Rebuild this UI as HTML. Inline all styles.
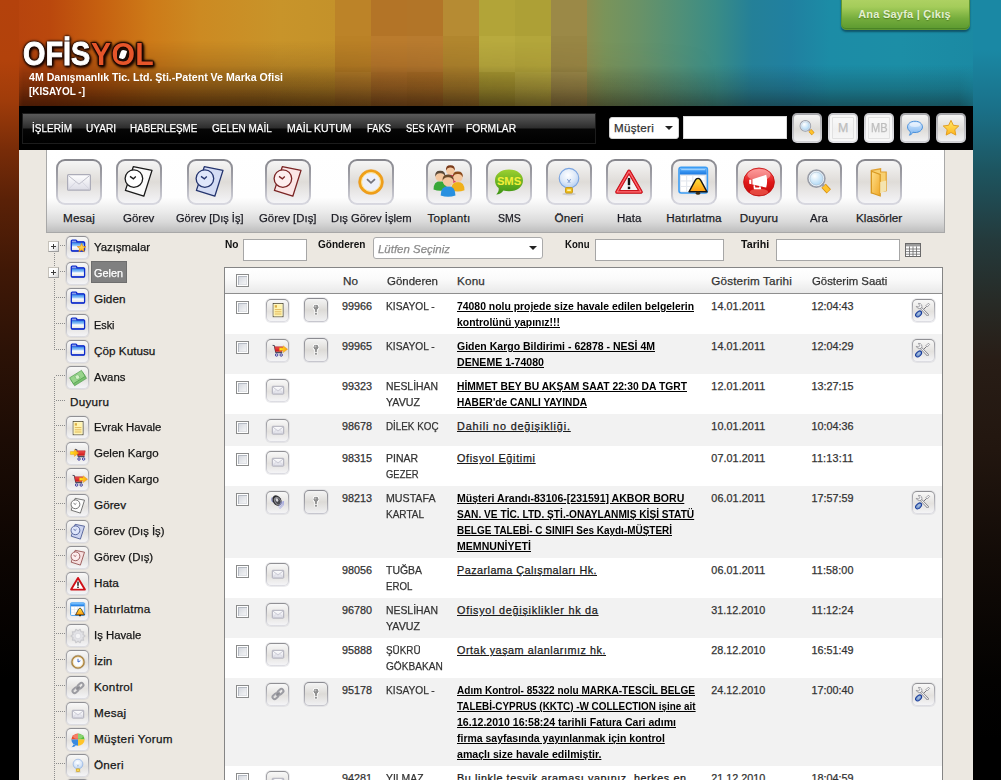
<!DOCTYPE html>
<html lang="tr"><head><meta charset="utf-8"><title>Ofisyol</title>
<style>
html,body{margin:0;padding:0}
body{width:1001px;height:780px;overflow:hidden;position:relative;background:#000;font-family:'Liberation Sans',sans-serif}
.t{position:absolute;white-space:pre;font-family:'Liberation Sans',sans-serif;transform-origin:0 50%;-webkit-text-stroke:.25px currentColor}
#bg{position:absolute;left:0;top:0;width:1001px;height:780px;overflow:hidden;
 background:linear-gradient(to right,#3a1a0a 0,#3a1a0a 20px,#222a26 970px,#222a26 100%)}
#bgfade{position:absolute;left:19px;top:0;width:982px;height:108px;-webkit-mask-image:linear-gradient(to right,#000 0,#000 940px,rgba(0,0,0,.4) 968px,rgba(0,0,0,.3) 100%);mask-image:linear-gradient(to right,#000 0,#000 940px,rgba(0,0,0,.4) 968px,rgba(0,0,0,.3) 100%);background:linear-gradient(to bottom,rgba(16,12,8,0) 0,rgba(16,12,8,0) 60%,rgba(16,12,8,.06) 67%,rgba(16,12,8,.2) 82%,rgba(16,12,8,.48) 100%)}
#bgfade:before{content:"";position:absolute;left:0;top:0;width:700px;height:108px;background:linear-gradient(to bottom,rgba(40,10,0,0) 0,rgba(40,10,0,0) 38%,rgba(40,10,0,.14) 60%,rgba(40,10,0,.3) 80%,rgba(36,10,0,.5) 100%);-webkit-mask-image:linear-gradient(to right,rgba(0,0,0,.6) 0,#000 4px,#000 35%,transparent 100%);mask-image:linear-gradient(to right,rgba(0,0,0,.6) 0,#000 4px,#000 35%,transparent 100%)}
#bgl{position:absolute;left:0;top:0;width:19px;height:780px;background:linear-gradient(to bottom,#b4420c 0,#b2420b 60px,#a03c0a 100px,#8c3409 125px,#782c08 150px,#5a2107 200px,#401806 270px,#2c1206 350px,#1c0c05 440px,#0c0502 560px,#000 680px)}
#bgr{position:absolute;left:973px;top:0;width:28px;height:780px;background:linear-gradient(to bottom,#1a88a4 0,#1a88a4 50px,#1a7088 110px,#1d5560 170px,#243a3c 240px,#272b27 300px,#281d16 360px,#22160f 450px,#120b07 560px,#030201 680px,#000 740px)}
.logo{position:absolute;top:34px;height:40px;line-height:40px;font-weight:bold;font-size:32.9px;white-space:nowrap;transform-origin:0 50%;
 text-shadow:0 0 2px #1a0900,0 0 2px #1a0900,0 0 3px #1a0900,0 0 3px #1a0900,0 0 4px #1a0900,1px 1px 2px #1a0900,1px 2px 3px #1a0900,2px 2px 4px rgba(20,8,0,.9);-webkit-text-stroke:.9px currentColor}
.lw{left:23.4px;color:#fff;transform:scaleX(.875)}
.lo{left:91px;top:34.5px;font-size:31px;color:#e6552a;transform:scaleX(.975);letter-spacing:.3px;-webkit-text-stroke:1.6px #3c1408;paint-order:stroke fill}
#lfig{position:absolute;left:116.5px;top:48.5px;width:11px;height:12px;border-radius:4px;background:#1a0d08;overflow:hidden}
#lfig:before{content:"";position:absolute;left:3px;top:1px;width:6px;height:9px;background:#fff;border-radius:3px 1px 3px 1px;transform:rotate(18deg)}
#exit{position:absolute;left:841px;top:-6px;width:129px;height:36px;border-radius:5px;background:linear-gradient(#b4d468 0,#a4cc5a 35%,#74ac3c 70%,#5c9a30 100%);box-shadow:0 2px 2px rgba(10,60,80,.7),inset 0 -1px 0 #4a8426;border:1px solid #5e9632;box-sizing:border-box}
#main{position:absolute;left:19px;top:106px;width:954px;height:674px;background:#ece8e1}
#nav{position:absolute;left:19px;top:106px;width:954px;height:44px;background:#000}
#menu{position:absolute;left:3px;top:7px;width:574px;height:31px;box-sizing:border-box;border:1px solid #1c1c1c;
 background:linear-gradient(#595959 0,#484848 20%,#2c2c2c 49%,#060606 51%,#000 100%)}
.sel{position:absolute;background:#fff;border-radius:3px}
.arr{position:absolute;width:0;height:0;border-left:4px solid transparent;border-right:4px solid transparent;border-top:4px solid #222}
.inp{position:absolute;background:#fff;border:1px solid #a6a6a6;box-sizing:border-box}
.nbtn{position:absolute;width:30px;height:30px;box-sizing:border-box;border-radius:5px;border:2px solid transparent;
 background:linear-gradient(#f4f4f4,#dedcd8 55%,#f0f0f2) padding-box,linear-gradient(#a6a6aa,#d2d2d6) border-box;display:flex;align-items:center;justify-content:center}
#tb{position:absolute;left:46px;top:150px;width:899px;height:83px;box-sizing:border-box;border:1px solid #a8a8a8;border-top:none;
 background:linear-gradient(#fff 0,#fefefe 58%,#ebebeb 75%,#d9d9d9 88%,#bebebe 100%)}
.nbtn.dis{background:linear-gradient(#fbfbfb,#f1f1f1 55%,#f8f8f8) padding-box,linear-gradient(#c8c8cc,#e4e4e8) border-box;box-shadow:inset 0 0 0 2px #f7f7f7,inset 0 0 0 3px #e2e2e2}
.bbtn{position:absolute;width:46px;height:46px;box-sizing:border-box;border-radius:9px;border:2px solid transparent;
 background:linear-gradient(#f5f5f5 0,#dfdcd8 50%,#f4f4f7 100%) padding-box,linear-gradient(#86868c 0,#a8a8b0 50%,#dadae2 100%) border-box;display:flex;align-items:center;justify-content:center}
.sbtn{position:absolute;width:23px;height:23px;box-sizing:border-box;border-radius:5px;border:1px solid transparent;
 background:linear-gradient(#f8f8f8 0,#e4e2df 55%,#f4f4f6 100%) padding-box,linear-gradient(#8e8e92 0,#b8b8be 50%,#dedee4 100%) border-box;display:flex;align-items:center;justify-content:center;box-shadow:0 0 0 1px rgba(200,200,205,.35)}
.kbtn{border-width:1.5px;background:linear-gradient(#f4f4f4 0,#dddbd7 50%,#f0f0f2 100%) padding-box,linear-gradient(#8a8a90 0,#a2a2a8 50%,#c8c8d0 100%) border-box}
.ic{display:block;overflow:visible}
.vd{position:absolute;width:1px;background:repeating-linear-gradient(to bottom,#8c8c8c 0,#8c8c8c 1px,transparent 1px,transparent 2px)}
.hd{position:absolute;height:1px;background:repeating-linear-gradient(to right,#8c8c8c 0,#8c8c8c 1px,transparent 1px,transparent 2px)}
.plus{position:absolute;width:11px;height:11px;box-sizing:border-box;border:1px solid #c6c2ba;border-right-color:#9e9e9e;border-bottom-color:#9e9e9e;background:linear-gradient(135deg,#fff 0,#fff 40%,#d6d6d6 100%)}
.plus:before{content:"";position:absolute;left:2px;top:4px;width:5px;height:1px;background:#3c3c3c}
.plus:after{content:"";position:absolute;left:4px;top:2px;width:1px;height:5px;background:#3c3c3c}
#tbl{position:absolute;left:224px;top:267px;width:719px;height:520px;box-sizing:border-box;border:1px solid #858585;background:#fff}
#th{position:absolute;left:0;top:0;width:717px;height:26px;box-sizing:border-box;border-bottom:1px solid #8e8e8e;background:linear-gradient(#fff 0,#fafafa 45%,#e9e9e9 100%)}
.alt{position:absolute;left:225px;width:717px;background:#f2f2f2}
.cb{position:absolute;width:13px;height:13px;box-sizing:border-box;border:1px solid #8b8c8c;background:linear-gradient(135deg,#cdd1d9 0,#e4e6ea 50%,#fbfbfb 100%);box-shadow:inset 0 0 0 1px #fff,inset 1px 1px 0 1px #b4b9c2,inset -1px -1px 0 1px #dfe1e5}
</style></head>
<body>
<svg width="0" height="0" style="position:absolute"><defs>
<linearGradient id="gFold" x1="0" y1="0" x2="0" y2="1"><stop offset="0" stop-color="#cfe6ff"/><stop offset="0.16" stop-color="#ffffff"/><stop offset="0.24" stop-color="#2f86ea"/><stop offset="0.56" stop-color="#b4d8fa"/><stop offset="0.6" stop-color="#ffffff"/><stop offset="1" stop-color="#dcdcdc"/></linearGradient>
<linearGradient id="gEnv" x1="0" y1="0" x2="0" y2="1"><stop offset="0" stop-color="#ffffff"/><stop offset="1" stop-color="#dcdce6"/></linearGradient>
<linearGradient id="gGold" x1="0" y1="0" x2="0" y2="1"><stop offset="0" stop-color="#ffea6a"/><stop offset="1" stop-color="#ffb41c"/></linearGradient>
<linearGradient id="gRed" x1="0" y1="0" x2="0" y2="1"><stop offset="0" stop-color="#ff6a6a"/><stop offset="0.5" stop-color="#e01818"/><stop offset="1" stop-color="#c00808"/></linearGradient>
<linearGradient id="gSms" x1="0" y1="0" x2="0" y2="1"><stop offset="0" stop-color="#9cd030"/><stop offset="1" stop-color="#3c9414"/></linearGradient>
<linearGradient id="gBub" x1="0" y1="0" x2="0" y2="1"><stop offset="0" stop-color="#dcecff"/><stop offset="1" stop-color="#7ab4f0"/></linearGradient>
<radialGradient id="gLens" cx="0.4" cy="0.35" r="0.7"><stop offset="0" stop-color="#ffffff"/><stop offset="1" stop-color="#9cd0f4"/></radialGradient>
<radialGradient id="gBulb" cx="0.45" cy="0.35" r="0.65"><stop offset="0" stop-color="#ffffff"/><stop offset="0.6" stop-color="#dce8f8"/><stop offset="1" stop-color="#b4cef0"/></radialGradient>
<linearGradient id="gCart" x1="0" y1="0" x2="0" y2="1"><stop offset="0" stop-color="#f05050"/><stop offset="1" stop-color="#d01818"/></linearGradient>
<linearGradient id="gArrow" x1="0" y1="0" x2="1" y2="0"><stop offset="0" stop-color="#fff020"/><stop offset="1" stop-color="#ff9a10"/></linearGradient>
<linearGradient id="gBell" x1="0" y1="0" x2="0" y2="1"><stop offset="0" stop-color="#ffe23a"/><stop offset="1" stop-color="#ff9a10"/></linearGradient>
<linearGradient id="gCal" x1="0" y1="0" x2="0" y2="1"><stop offset="0" stop-color="#58b0ff"/><stop offset="1" stop-color="#1a78e0"/></linearGradient>
<linearGradient id="gFolY" x1="0" y1="0" x2="1" y2="1"><stop offset="0" stop-color="#ffe08a"/><stop offset="1" stop-color="#f0a828"/></linearGradient>
</defs></svg>
<div id="bg"><svg style="position:absolute;left:0;top:0" width="1001" height="108" viewBox="0 0 1001 108" shape-rendering="crispEdges"><defs><linearGradient id="hz" x1="0" y1="0" x2="1" y2="0"><stop offset="0.0000" stop-color="rgb(181,66,14)"/><stop offset="0.0500" stop-color="rgb(186,72,13)"/><stop offset="0.0999" stop-color="rgb(198,96,16)"/><stop offset="0.1499" stop-color="rgb(205,122,24)"/><stop offset="0.1998" stop-color="rgb(204,138,34)"/><stop offset="0.2797" stop-color="rgb(200,148,42)"/><stop offset="0.3347" stop-color="rgb(196,146,42)"/><stop offset="0.3706" stop-color="rgb(186,122,44)"/><stop offset="0.4426" stop-color="rgb(184,124,48)"/><stop offset="0.4595" stop-color="rgb(184,140,52)"/><stop offset="0.4965" stop-color="rgb(180,166,58)"/><stop offset="0.5504" stop-color="rgb(176,164,58)"/><stop offset="0.5684" stop-color="rgb(154,136,70)"/><stop offset="0.6044" stop-color="rgb(122,148,90)"/><stop offset="0.6404" stop-color="rgb(104,146,104)"/><stop offset="0.6793" stop-color="rgb(80,144,120)"/><stop offset="0.7153" stop-color="rgb(58,140,134)"/><stop offset="0.7512" stop-color="rgb(36,128,152)"/><stop offset="0.7892" stop-color="rgb(32,128,160)"/><stop offset="0.8292" stop-color="rgb(28,140,166)"/><stop offset="0.8991" stop-color="rgb(28,142,166)"/><stop offset="1.0000" stop-color="rgb(26,136,162)"/></linearGradient></defs><rect width="1001" height="108" fill="url(#hz)"/><rect x="335" y="0" width="36" height="36" fill="rgb(188,131,40)"/><rect x="335" y="36" width="36" height="36" fill="rgb(186,129,38)"/><rect x="335" y="72" width="36" height="36" fill="rgb(193,136,45)"/><rect x="371" y="0" width="36" height="36" fill="rgb(179,116,39)"/><rect x="371" y="36" width="36" height="36" fill="rgb(186,123,45)"/><rect x="371" y="72" width="36" height="36" fill="rgb(183,120,43)"/><rect x="407" y="0" width="36" height="36" fill="rgb(178,117,40)"/><rect x="407" y="36" width="36" height="36" fill="rgb(184,123,47)"/><rect x="407" y="72" width="36" height="36" fill="rgb(178,117,40)"/><rect x="443" y="0" width="36" height="36" fill="rgb(182,139,51)"/><rect x="443" y="36" width="36" height="36" fill="rgb(177,134,46)"/><rect x="443" y="72" width="36" height="36" fill="rgb(178,134,46)"/><rect x="479" y="0" width="36" height="36" fill="rgb(178,164,56)"/><rect x="479" y="36" width="36" height="36" fill="rgb(184,170,62)"/><rect x="479" y="72" width="36" height="36" fill="rgb(174,160,52)"/><rect x="515" y="0" width="36" height="36" fill="rgb(173,160,54)"/><rect x="515" y="36" width="36" height="36" fill="rgb(179,166,59)"/><rect x="515" y="72" width="36" height="36" fill="rgb(183,170,64)"/><rect x="551" y="0" width="36" height="36" fill="rgb(155,137,71)"/><rect x="551" y="36" width="36" height="36" fill="rgb(152,134,68)"/><rect x="551" y="72" width="36" height="36" fill="rgb(160,142,76)"/></svg><div id="bgfade"></div><div id="bgl"></div><div id="bgr"></div></div>
<div class="logo lw">OFİS</div><div class="logo lo">YOL</div><div id="lfig"></div>
<div id="exit"></div>
<div id="main"></div>
<div id="nav"><div id="menu"></div></div>
<div class="sel" style="left:609px;top:117px;width:70px;height:22px;box-sizing:border-box;border:1px solid #d4d4d4"></div>
<div class="arr" style="left:665px;top:126px"></div>
<div class="inp" style="left:683px;top:116px;width:104px;height:23px;border-color:#d8d8d8"></div>
<div class="nbtn" style="left:792px;top:113px"><svg class="ic" width="20" height="20" viewBox="0 0 16 16" ><path d="M10.3 9.9 L12.9 12.7" stroke="#d89010" stroke-width="3" stroke-linecap="butt"/><path d="M10.4 10 L12.7 12.5" stroke="#ffc42c" stroke-width="2.1" stroke-linecap="butt"/><path d="M9.3 8.9 L10.4 10" stroke="#a0a0a8" stroke-width="1.5"/><circle cx="6.7" cy="6.3" r="4.2" fill="url(#gLens)" stroke="#9a9ea8" stroke-width="0.9"/><circle cx="6.7" cy="6.3" r="3.6" fill="none" stroke="#eef2f8" stroke-width="0.5"/><circle cx="6.7" cy="6.3" r="3.2" fill="none" stroke="#b4c4d4" stroke-width="0.3"/></svg></div>
<div class="nbtn dis" style="left:828px;top:113px"></div>
<div class="nbtn dis" style="left:864px;top:113px"></div>
<div class="nbtn" style="left:900px;top:113px"><svg class="ic" width="18" height="18" viewBox="0 0 16 16" ><path d="M8 2 C12 2 14.6 4.2 14.6 7 C14.6 9.8 12 12 8 12 C7.4 12 6.8 11.9 6.2 11.8 C5.6 13 4.4 14 3 14.4 C3.8 13.4 4 12.2 3.8 11.2 C2.2 10.2 1.4 8.8 1.4 7 C1.4 4.2 4 2 8 2Z" fill="url(#gBub)" stroke="#3c88d8" stroke-width="0.8"/><ellipse cx="8" cy="5" rx="4.6" ry="2" fill="#ffffff" opacity="0.5"/></svg></div>
<div class="nbtn" style="left:936px;top:113px"><svg class="ic" width="18" height="18" viewBox="0 0 16 16" ><path d="M8 1.2 L10.1 5.6 L14.9 6.2 L11.4 9.5 L12.3 14.3 L8 12 L3.7 14.3 L4.6 9.5 L1.1 6.2 L5.9 5.6 Z" fill="url(#gGold)" stroke="#e09818" stroke-width="0.8" stroke-linejoin="round"/></svg></div>
<div id="tb"></div>
<div class="bbtn" style="left:56px;top:159px"><svg class="ic" width="32" height="32" viewBox="0 0 16 16" ><rect x="2.3" y="4.3" width="11.4" height="7.8" rx="0.5" fill="url(#gEnv)" stroke="#acacb8" stroke-width="0.6"/><path d="M2.7 4.8 L8 9.1 L13.3 4.8" fill="none" stroke="#bcbcc8" stroke-width="0.48"/><path d="M2.7 11.7 L6.4 8 M13.3 11.7 L9.6 8" fill="none" stroke="#d2d2dc" stroke-width="0.42"/></svg></div>
<div class="bbtn" style="left:116px;top:159px"><svg class="ic" width="32" height="32" viewBox="0 0 16 16" ><path d="M5.15 0.35 L14.5 2.2 L10.4 15.1 L1.2 12.2 Z" fill="#fafafa" stroke="#1a1a1a" stroke-width="0.65" stroke-linejoin="round"/><circle cx="5.45" cy="6.3" r="4.4" fill="#ffffff" stroke="#1a1a1a" stroke-width="0.65"/><path d="M3.5 5.2 L5.2 6.4 L6.4 5.3" fill="none" stroke="#1a1a1a" stroke-width="0.65"/></svg></div>
<div class="bbtn" style="left:187px;top:159px"><svg class="ic" width="32" height="32" viewBox="0 0 16 16" ><path d="M5.15 0.35 L14.5 2.2 L10.4 15.1 L1.2 12.2 Z" fill="#d4dcf4" stroke="#24346e" stroke-width="0.65" stroke-linejoin="round"/><circle cx="5.45" cy="6.3" r="4.4" fill="#dfe6fa" stroke="#24346e" stroke-width="0.65"/><path d="M3.5 5.2 L5.2 6.4 L6.4 5.3" fill="none" stroke="#24346e" stroke-width="0.65"/></svg></div>
<div class="bbtn" style="left:265px;top:159px"><svg class="ic" width="32" height="32" viewBox="0 0 16 16" ><path d="M5.15 0.35 L14.5 2.2 L10.4 15.1 L1.2 12.2 Z" fill="#fbe6e6" stroke="#7a2424" stroke-width="0.65" stroke-linejoin="round"/><circle cx="5.45" cy="6.3" r="4.4" fill="#fdeeee" stroke="#7a2424" stroke-width="0.65"/><path d="M3.5 5.2 L5.2 6.4 L6.4 5.3" fill="none" stroke="#7a2424" stroke-width="0.65"/></svg></div>
<div class="bbtn" style="left:348px;top:159px"><svg class="ic" width="32" height="32" viewBox="0 0 16 16" ><circle cx="8" cy="8" r="5.5" fill="#eef0fa" stroke="#f0a018" stroke-width="1.3"/><circle cx="8" cy="8" r="4.7" fill="none" stroke="#ffe08a" stroke-width="0.5"/><circle cx="8" cy="8" r="6.2" fill="none" stroke="#e89010" stroke-width="0.3"/><path d="M6 6.6 L8 8.4 L10 6.6" fill="none" stroke="#74747e" stroke-width="0.9"/></svg></div>
<div class="bbtn" style="left:426px;top:159px"><svg class="ic" width="32" height="32" viewBox="0 0 16 16" ><g transform="translate(8 8) scale(1.16) translate(-8 -8.6)"><path d="M6.039999999999999 8.56 Q6.039999999999999 5.36 8.6 5.36 Q11.16 5.36 11.16 8.56 Q8.6 9.520000000000001 6.039999999999999 8.56Z" fill="#e03860"/><circle cx="8.6" cy="3.6" r="1.8399999999999999" fill="#f4c8a0"/><path d="M6.68 3.6 Q6.52 1.2800000000000002 8.6 1.3600000000000003 Q10.68 1.2800000000000002 10.52 3.6 Q9.879999999999999 2.16 8.6 2.32 Q7.319999999999999 2.16 6.68 3.6Z" fill="#7a3a1a"/><path d="M1.3199999999999998 11.879999999999999 Q1.3199999999999998 8.28 4.2 8.28 Q7.08 8.28 7.08 11.879999999999999 Q4.2 12.96 1.3199999999999998 11.879999999999999Z" fill="#38a838"/><circle cx="4.2" cy="6.3" r="2.07" fill="#f4c8a0"/><path d="M2.04 6.3 Q1.8599999999999999 3.69 4.2 3.78 Q6.540000000000001 3.69 6.36 6.3 Q5.640000000000001 4.68 4.2 4.859999999999999 Q2.76 4.68 2.04 6.3Z" fill="#5a4a3a"/><path d="M8.92 12.18 Q8.92 8.58 11.8 8.58 Q14.680000000000001 8.58 14.680000000000001 12.18 Q11.8 13.26 8.92 12.18Z" fill="#f0b018"/><circle cx="11.8" cy="6.6" r="2.07" fill="#f4c8a0"/><path d="M9.64 6.6 Q9.46 3.9899999999999998 11.8 4.08 Q14.14 3.9899999999999998 13.96 6.6 Q13.24 4.9799999999999995 11.8 5.159999999999999 Q10.360000000000001 4.9799999999999995 9.64 6.6Z" fill="#8a4a1a"/><path d="M4.3999999999999995 14.399999999999999 Q4.3999999999999995 10.399999999999999 7.6 10.399999999999999 Q10.8 10.399999999999999 10.8 14.399999999999999 Q7.6 15.6 4.3999999999999995 14.399999999999999Z" fill="#2890e0"/><circle cx="7.6" cy="8.2" r="2.3" fill="#f4c8a0"/><path d="M5.199999999999999 8.2 Q5.0 5.299999999999999 7.6 5.3999999999999995 Q10.2 5.299999999999999 10.0 8.2 Q9.2 6.3999999999999995 7.6 6.6 Q6.0 6.3999999999999995 5.199999999999999 8.2Z" fill="#6a4a2a"/></g></svg></div>
<div class="bbtn" style="left:486px;top:159px"><svg class="ic" width="32" height="32" viewBox="0 0 16 16" ><path d="M8 1.8 C12.2 1.8 15 4.2 15 7.2 C15 10.2 12.2 12.6 8 12.6 C7 12.6 6 12.4 5.2 12.2 C4.4 13.4 3 14.2 1.6 14.2 C2.6 13.4 3 12.2 2.8 11 C1.6 10 1 8.8 1 7.2 C1 4.2 3.8 1.8 8 1.8Z" fill="url(#gSms)"/><text x="8" y="9.3" font-family="Liberation Sans, sans-serif" font-weight="bold" font-size="5.6" text-anchor="middle" fill="#f4f03a">SMS</text></svg></div>
<div class="bbtn" style="left:546px;top:159px"><svg class="ic" width="32" height="32" viewBox="0 0 16 16" ><ellipse cx="8" cy="14" rx="3.4" ry="0.7" fill="#000" opacity="0.12"/><circle cx="8" cy="6.1" r="4.9" fill="url(#gBulb)" stroke="#7aa4e0" stroke-width="0.55"/><path d="M7.2 6.6 L8 7.8 L8.8 6.6 M7.4 8.4 L8 7.8 L8.6 8.4" fill="none" stroke="#6a8cc8" stroke-width="0.45"/><rect x="6.3" y="10.8" width="3.4" height="2.7" rx="0.4" fill="#f0c020" stroke="#c89810" stroke-width="0.5"/><rect x="7.1" y="11.7" width="1.8" height="0.8" fill="#fff4b0"/></svg></div>
<div class="bbtn" style="left:606px;top:159px"><svg class="ic" width="32" height="32" viewBox="0 0 16 16" ><g transform="translate(8 8.2) scale(0.93) translate(-8 -8.2)"><path d="M8 2.3 L14.4 13.3 H1.6 Z" fill="#f4f4f4" stroke="#b00810" stroke-width="2" stroke-linejoin="round"/><path d="M8 2.3 L14.4 13.3 H1.6 Z" fill="none" stroke="#e8202a" stroke-width="1.45" stroke-linejoin="round"/><path d="M8 2.3 L14.4 13.3 H1.6 Z" fill="none" stroke="#ffb0b0" stroke-width="0.35" stroke-linejoin="round"/><rect x="7.35" y="5.8" width="1.3" height="3.9" fill="#111"/><rect x="7.35" y="10.5" width="1.3" height="1.3" fill="#111"/></g></svg></div>
<div class="bbtn" style="left:671px;top:159px"><svg class="ic" width="32" height="32" viewBox="0 0 16 16" ><rect x="0.5" y="0.7" width="14.2" height="12.8" rx="1.1" fill="#e4e8ee" stroke="#3a9cf4" stroke-width="0.8"/><path d="M0.9 4.3 V1.8 Q0.9 1.1 1.6 1.1 H13.6 Q14.3 1.1 14.3 1.8 V4.3 Z" fill="url(#gCal)"/><path d="M1.6 1.8 H13.6" stroke="#9ad0ff" stroke-width="0.6"/><rect x="1.50" y="5.00" width="2.5" height="2.2" fill="#ffffff"/><rect x="4.60" y="5.00" width="2.5" height="2.2" fill="#ffffff"/><rect x="7.70" y="5.00" width="2.5" height="2.2" fill="#ffffff"/><rect x="10.80" y="5.00" width="2.5" height="2.2" fill="#ffffff"/><rect x="1.50" y="7.75" width="2.5" height="2.2" fill="#ffffff"/><rect x="4.60" y="7.75" width="2.5" height="2.2" fill="#ffffff"/><rect x="7.70" y="7.75" width="2.5" height="2.2" fill="#ffffff"/><rect x="10.80" y="7.75" width="2.5" height="2.2" fill="#ffffff"/><rect x="1.50" y="10.50" width="2.5" height="2.2" fill="#ffffff"/><rect x="4.60" y="10.50" width="2.5" height="2.2" fill="#ffffff"/><rect x="7.70" y="10.50" width="2.5" height="2.2" fill="#ffffff"/><rect x="10.80" y="10.50" width="2.5" height="2.2" fill="#ffffff"/><path d="M10 6.2 Q10.9 6.2 11.4 7.2 L14.5 12.9 H5.5 L8.6 7.2 Q9.1 6.2 10 6.2Z" fill="url(#gBell)" stroke="#141414" stroke-width="0.7" stroke-linejoin="round"/><ellipse cx="10" cy="13.6" rx="1.1" ry="0.8" fill="#3a2a10"/></svg></div>
<div class="bbtn" style="left:736px;top:159px"><svg class="ic" width="32" height="32" viewBox="0 0 16 16" ><ellipse cx="8" cy="8" rx="7.7" ry="7" fill="url(#gRed)" stroke="#c00c0c" stroke-width="0.4"/><ellipse cx="8" cy="4.4" rx="5.8" ry="2.9" fill="#ffffff" opacity="0.35"/><ellipse cx="8" cy="13" rx="4.6" ry="1.6" fill="#ff7a6a" opacity="0.55"/><path d="M3.1 6.9 L4.2 6.7 L4.2 9.1 L3.1 8.9 Z M4.7 6.6 L11.6 4.4 Q12.5 7.6 11.6 10.8 L4.7 9.2 Z" fill="#ffffff"/><path d="M5.6 9.7 L5.8 11.2 H8.6 L8.4 10.2" fill="none" stroke="#ffffff" stroke-width="0.8"/></svg></div>
<div class="bbtn" style="left:796px;top:159px"><svg class="ic" width="32" height="32" viewBox="0 0 16 16" ><path d="M10.3 9.9 L12.9 12.7" stroke="#d89010" stroke-width="3" stroke-linecap="butt"/><path d="M10.4 10 L12.7 12.5" stroke="#ffc42c" stroke-width="2.1" stroke-linecap="butt"/><path d="M9.3 8.9 L10.4 10" stroke="#a0a0a8" stroke-width="1.5"/><circle cx="6.7" cy="6.3" r="4.2" fill="url(#gLens)" stroke="#9a9ea8" stroke-width="0.9"/><circle cx="6.7" cy="6.3" r="3.6" fill="none" stroke="#eef2f8" stroke-width="0.5"/><circle cx="6.7" cy="6.3" r="3.2" fill="none" stroke="#b4c4d4" stroke-width="0.3"/></svg></div>
<div class="bbtn" style="left:856px;top:159px"><svg class="ic" width="32" height="32" viewBox="0 0 16 16" ><path d="M4.2 2.2 L8.8 1.4 L8.8 3 L11.6 3 V12.4 L4.2 13.4 Z" fill="#f8d070" stroke="#e0a030" stroke-width="0.6"/><path d="M4.2 2.6 L8.6 4.2 V15 L4.2 13.4 Z" fill="url(#gFolY)" stroke="#d89820" stroke-width="0.6"/><path d="M8.6 8 L11.6 7.2 V12.4 L8.6 13.6Z" fill="#f4e4b0"/></svg></div>
<div class="vd" style="left:54px;top:253px;height:14px"></div><div class="vd" style="left:54px;top:279px;height:71px"></div>
<div class="vd" style="left:54px;top:377px;height:403px"></div>
<div class="plus" style="left:48px;top:241px"></div><div class="hd" style="left:60px;top:245px;width:6px"></div>
<div class="sbtn" style="left:66px;top:236px"><svg class="ic" width="16" height="16" viewBox="0 0 16 16" ><g transform="translate(0 -0.8)"><path d="M1.3 1.9 Q1.3 0.9 2.3 0.9 H5.8 Q6.8 0.9 6.8 1.9 V2.6 H13.6 Q14.6 2.6 14.6 3.6 V10.9 Q14.6 11.9 13.6 11.9 H2.3 Q1.3 11.9 1.3 10.9 Z" fill="url(#gFold)" stroke="#0c2acc" stroke-width="1.3" stroke-linejoin="round"/><path d="M1.6 11.6 H14.3" stroke="#0c2acc" stroke-width="1.1"/><path d="M1.6 2.8 H14" stroke="#0c2acc" stroke-width="0.9"/></g><polygon points="11.60,3.40 12.78,6.38 15.97,6.58 13.50,8.62 14.30,11.72 11.60,10.00 8.90,11.72 9.70,8.62 7.23,6.58 10.42,6.38" fill="url(#gGold)" stroke="#e08a10" stroke-width="0.7" stroke-linejoin="round"/></svg></div>
<div class="plus" style="left:48px;top:267px"></div><div class="hd" style="left:60px;top:271px;width:6px"></div>
<div class="sbtn" style="left:66px;top:262px"><svg class="ic" width="16" height="16" viewBox="0 0 16 16" ><g transform="translate(0 -0.8)"><path d="M1.3 1.9 Q1.3 0.9 2.3 0.9 H5.8 Q6.8 0.9 6.8 1.9 V2.6 H13.6 Q14.6 2.6 14.6 3.6 V10.9 Q14.6 11.9 13.6 11.9 H2.3 Q1.3 11.9 1.3 10.9 Z" fill="url(#gFold)" stroke="#0c2acc" stroke-width="1.3" stroke-linejoin="round"/><path d="M1.6 11.6 H14.3" stroke="#0c2acc" stroke-width="1.1"/><path d="M1.6 2.8 H14" stroke="#0c2acc" stroke-width="0.9"/></g></svg></div>
<div style="position:absolute;left:91px;top:261px;width:36px;height:22px;background:#808080;box-sizing:border-box;border:1px solid #6e6e6e"></div>
<div class="hd" style="left:56px;top:297px;width:10px"></div>
<div class="sbtn" style="left:66px;top:288px"><svg class="ic" width="16" height="16" viewBox="0 0 16 16" ><g transform="translate(0 -0.8)"><path d="M1.3 1.9 Q1.3 0.9 2.3 0.9 H5.8 Q6.8 0.9 6.8 1.9 V2.6 H13.6 Q14.6 2.6 14.6 3.6 V10.9 Q14.6 11.9 13.6 11.9 H2.3 Q1.3 11.9 1.3 10.9 Z" fill="url(#gFold)" stroke="#0c2acc" stroke-width="1.3" stroke-linejoin="round"/><path d="M1.6 11.6 H14.3" stroke="#0c2acc" stroke-width="1.1"/><path d="M1.6 2.8 H14" stroke="#0c2acc" stroke-width="0.9"/></g></svg></div>
<div class="hd" style="left:56px;top:323px;width:10px"></div>
<div class="sbtn" style="left:66px;top:314px"><svg class="ic" width="16" height="16" viewBox="0 0 16 16" ><g transform="translate(0 -0.8)"><path d="M1.3 1.9 Q1.3 0.9 2.3 0.9 H5.8 Q6.8 0.9 6.8 1.9 V2.6 H13.6 Q14.6 2.6 14.6 3.6 V10.9 Q14.6 11.9 13.6 11.9 H2.3 Q1.3 11.9 1.3 10.9 Z" fill="url(#gFold)" stroke="#0c2acc" stroke-width="1.3" stroke-linejoin="round"/><path d="M1.6 11.6 H14.3" stroke="#0c2acc" stroke-width="1.1"/><path d="M1.6 2.8 H14" stroke="#0c2acc" stroke-width="0.9"/></g></svg></div>
<div class="hd" style="left:56px;top:349px;width:10px"></div>
<div class="sbtn" style="left:66px;top:340px"><svg class="ic" width="16" height="16" viewBox="0 0 16 16" ><g transform="translate(0 -0.8)"><path d="M1.3 1.9 Q1.3 0.9 2.3 0.9 H5.8 Q6.8 0.9 6.8 1.9 V2.6 H13.6 Q14.6 2.6 14.6 3.6 V10.9 Q14.6 11.9 13.6 11.9 H2.3 Q1.3 11.9 1.3 10.9 Z" fill="url(#gFold)" stroke="#0c2acc" stroke-width="1.3" stroke-linejoin="round"/><path d="M1.6 11.6 H14.3" stroke="#0c2acc" stroke-width="1.1"/><path d="M1.6 2.8 H14" stroke="#0c2acc" stroke-width="0.9"/></g></svg></div>
<div class="hd" style="left:56px;top:375px;width:10px"></div>
<div class="sbtn" style="left:66px;top:366px"><svg class="ic" width="16" height="16" viewBox="0 0 16 16" ><g transform="rotate(-32 8 8)"><rect x="1" y="5.8" width="14" height="7" fill="#7ac070" stroke="#4a9848" stroke-width="0.6"/><rect x="1" y="3.4" width="14" height="7" fill="#98d48c" stroke="#4a9848" stroke-width="0.6"/><ellipse cx="8" cy="6.9" rx="2.2" ry="2.4" fill="#d4f0c8" stroke="#5aa858" stroke-width="0.5"/></g></svg></div>
<div class="hd" style="left:56px;top:400px;width:10px"></div>
<div class="hd" style="left:56px;top:425px;width:10px"></div>
<div class="sbtn" style="left:66px;top:416px"><svg class="ic" width="16" height="16" viewBox="0 0 16 16" ><rect x="3.2" y="1.5" width="9.8" height="13.2" fill="#fff4b0" stroke="#4a4632" stroke-width="0.9"/><rect x="3.8" y="2.1" width="8.6" height="12" fill="none" stroke="#fffbe0" stroke-width="0.5"/><rect x="4.8" y="3.2" width="2.2" height="2.4" fill="#dcae44"/><path d="M4.8 7.6H11.4 M4.8 9.8H11.4 M4.8 12H11.4" stroke="#dcb050" stroke-width="0.9"/></svg></div>
<div class="hd" style="left:56px;top:451px;width:10px"></div>
<div class="sbtn" style="left:66px;top:442px"><svg class="ic" width="16" height="16" viewBox="0 0 16 16" ><g transform="translate(3.6 0.6)"><path d="M1.4 2.6 L3.2 3.2 L4.6 10 H11" fill="none" stroke="#4e4e5e" stroke-width="1.1" stroke-linejoin="round"/><path d="M3.5 4.2 H11.6 L10.8 8.8 H4.4 Z" fill="url(#gCart)" stroke="#b01c1c" stroke-width="0.5"/><circle cx="5.4" cy="12.4" r="1.25" fill="#d8d8f0" stroke="#3c3c98" stroke-width="0.9"/><circle cx="10" cy="12.4" r="1.25" fill="#d8d8f0" stroke="#3c3c98" stroke-width="0.9"/></g><path d="M0.4 5.6 H4.4 V3.6 L8.8 7 L4.4 10.4 V8.4 H0.4 Z" fill="url(#gArrow)" stroke="#e08a10" stroke-width="0.4"/></svg></div>
<div class="hd" style="left:56px;top:477px;width:10px"></div>
<div class="sbtn" style="left:66px;top:468px"><svg class="ic" width="16" height="16" viewBox="0 0 16 16" ><g transform="translate(1.2 0.6)"><path d="M1.4 2.6 L3.2 3.2 L4.6 10 H11" fill="none" stroke="#4e4e5e" stroke-width="1.1" stroke-linejoin="round"/><path d="M3.5 4.2 H11.6 L10.8 8.8 H4.4 Z" fill="url(#gCart)" stroke="#b01c1c" stroke-width="0.5"/><circle cx="5.4" cy="12.4" r="1.25" fill="#d8d8f0" stroke="#3c3c98" stroke-width="0.9"/><circle cx="10" cy="12.4" r="1.25" fill="#d8d8f0" stroke="#3c3c98" stroke-width="0.9"/><path d="M8.2 5.2 H12 V3.2 L16.4 6.6 L12 10 V8 H8.2 Z" fill="url(#gArrow)" stroke="#e08a10" stroke-width="0.4"/></g></svg></div>
<div class="hd" style="left:56px;top:503px;width:10px"></div>
<div class="sbtn" style="left:66px;top:494px"><svg class="ic" width="16" height="16" viewBox="0 0 16 16" ><path d="M5.15 0.35 L14.5 2.2 L10.4 15.1 L1.2 12.2 Z" fill="#fcfcfc" stroke="#555" stroke-width="0.8" stroke-linejoin="round"/><circle cx="5.45" cy="6.3" r="4.4" fill="#fff" stroke="#555" stroke-width="0.8"/><path d="M3.5 5.2 L5.2 6.4 L6.4 5.3" fill="none" stroke="#555" stroke-width="0.8"/></svg></div>
<div class="hd" style="left:56px;top:529px;width:10px"></div>
<div class="sbtn" style="left:66px;top:520px"><svg class="ic" width="16" height="16" viewBox="0 0 16 16" ><path d="M5.15 0.35 L14.5 2.2 L10.4 15.1 L1.2 12.2 Z" fill="#ccd4f0" stroke="#3c4c8c" stroke-width="0.8" stroke-linejoin="round"/><circle cx="5.45" cy="6.3" r="4.4" fill="#dfe6fa" stroke="#3c4c8c" stroke-width="0.8"/><path d="M3.5 5.2 L5.2 6.4 L6.4 5.3" fill="none" stroke="#3c4c8c" stroke-width="0.8"/></svg></div>
<div class="hd" style="left:56px;top:555px;width:10px"></div>
<div class="sbtn" style="left:66px;top:546px"><svg class="ic" width="16" height="16" viewBox="0 0 16 16" ><path d="M5.15 0.35 L14.5 2.2 L10.4 15.1 L1.2 12.2 Z" fill="#f6e0e0" stroke="#8c4040" stroke-width="0.8" stroke-linejoin="round"/><circle cx="5.45" cy="6.3" r="4.4" fill="#fdeeee" stroke="#8c4040" stroke-width="0.8"/><path d="M3.5 5.2 L5.2 6.4 L6.4 5.3" fill="none" stroke="#8c4040" stroke-width="0.8"/></svg></div>
<div class="hd" style="left:56px;top:581px;width:10px"></div>
<div class="sbtn" style="left:66px;top:572px"><svg class="ic" width="16" height="16" viewBox="0 0 16 16" ><path d="M8 1.9 L14.9 13.6 H1.1 Z" fill="#ffffff" stroke="#d01018" stroke-width="1.9" stroke-linejoin="round"/><rect x="7.3" y="5.6" width="1.4" height="4.2" fill="#111"/><rect x="7.3" y="10.6" width="1.4" height="1.4" fill="#111"/></svg></div>
<div class="hd" style="left:56px;top:607px;width:10px"></div>
<div class="sbtn" style="left:66px;top:598px"><svg class="ic" width="16" height="16" viewBox="0 0 16 16" ><rect x="0.5" y="0.7" width="14.2" height="12.8" rx="1.1" fill="#e4e8ee" stroke="#3a9cf4" stroke-width="0.8"/><path d="M0.9 4.3 V1.8 Q0.9 1.1 1.6 1.1 H13.6 Q14.3 1.1 14.3 1.8 V4.3 Z" fill="url(#gCal)"/><path d="M1.6 1.8 H13.6" stroke="#9ad0ff" stroke-width="0.6"/><rect x="1.50" y="5.00" width="2.5" height="2.2" fill="#ffffff"/><rect x="4.60" y="5.00" width="2.5" height="2.2" fill="#ffffff"/><rect x="7.70" y="5.00" width="2.5" height="2.2" fill="#ffffff"/><rect x="10.80" y="5.00" width="2.5" height="2.2" fill="#ffffff"/><rect x="1.50" y="7.75" width="2.5" height="2.2" fill="#ffffff"/><rect x="4.60" y="7.75" width="2.5" height="2.2" fill="#ffffff"/><rect x="7.70" y="7.75" width="2.5" height="2.2" fill="#ffffff"/><rect x="10.80" y="7.75" width="2.5" height="2.2" fill="#ffffff"/><rect x="1.50" y="10.50" width="2.5" height="2.2" fill="#ffffff"/><rect x="4.60" y="10.50" width="2.5" height="2.2" fill="#ffffff"/><rect x="7.70" y="10.50" width="2.5" height="2.2" fill="#ffffff"/><rect x="10.80" y="10.50" width="2.5" height="2.2" fill="#ffffff"/><path d="M10 6.2 Q10.9 6.2 11.4 7.2 L14.5 12.9 H5.5 L8.6 7.2 Q9.1 6.2 10 6.2Z" fill="url(#gBell)" stroke="#141414" stroke-width="0.7" stroke-linejoin="round"/><ellipse cx="10" cy="13.6" rx="1.1" ry="0.8" fill="#3a2a10"/></svg></div>
<div class="hd" style="left:56px;top:633px;width:10px"></div>
<div class="sbtn" style="left:66px;top:624px"><svg class="ic" width="16" height="16" viewBox="0 0 16 16" ><polygon points="15.00,8.00 12.95,9.61 13.66,12.11 11.06,12.21 10.16,14.66 8.00,13.20 5.84,14.66 4.94,12.21 2.34,12.11 3.05,9.61 1.00,8.00 3.05,6.39 2.34,3.89 4.94,3.79 5.84,1.34 8.00,2.80 10.16,1.34 11.06,3.79 13.66,3.89 12.95,6.39" fill="#e2e2e6" stroke="#cacace" stroke-width="1.2" stroke-linejoin="round"/><circle cx="8" cy="8" r="2.8" fill="#f4f4f6" stroke="#d4d4da" stroke-width="0.7"/></svg></div>
<div class="hd" style="left:56px;top:659px;width:10px"></div>
<div class="sbtn" style="left:66px;top:650px"><svg class="ic" width="16" height="16" viewBox="0 0 16 16" ><circle cx="8" cy="8" r="6" fill="#fbfcff" stroke="#b4883c" stroke-width="1.5"/><circle cx="8" cy="8" r="6.8" fill="none" stroke="#8c8478" stroke-width="0.4"/><circle cx="8" cy="8" r="4.9" fill="none" stroke="#e8d4a4" stroke-width="0.6"/><path d="M8 4.8 V8 L10.4 6.8" fill="none" stroke="#2858c0" stroke-width="0.9"/></svg></div>
<div class="hd" style="left:56px;top:685px;width:10px"></div>
<div class="sbtn" style="left:66px;top:676px"><svg class="ic" width="16" height="16" viewBox="0 0 16 16" ><g transform="rotate(-42 8 8)" fill="none" stroke="#9c9ca2" stroke-width="2"><rect x="1.4" y="5.9" width="6.4" height="4.2" rx="2.1"/><rect x="8.2" y="5.9" width="6.4" height="4.2" rx="2.1"/></g><g transform="rotate(-42 8 8)"><path d="M5.8 8H10.2" stroke="#8a8a90" stroke-width="1.8"/><path d="M2.6 7H6.4 M9.4 7H13.4" stroke="#c4c4ca" stroke-width="0.6"/></g></svg></div>
<div class="hd" style="left:56px;top:711px;width:10px"></div>
<div class="sbtn" style="left:66px;top:702px"><svg class="ic" width="16" height="16" viewBox="0 0 16 16" ><rect x="2.3" y="4.3" width="11.4" height="7.8" rx="0.5" fill="url(#gEnv)" stroke="#acacb8" stroke-width="1.0"/><path d="M2.7 4.8 L8 9.1 L13.3 4.8" fill="none" stroke="#bcbcc8" stroke-width="0.80"/><path d="M2.7 11.7 L6.4 8 M13.3 11.7 L9.6 8" fill="none" stroke="#d2d2dc" stroke-width="0.70"/></svg></div>
<div class="hd" style="left:56px;top:737px;width:10px"></div>
<div class="sbtn" style="left:66px;top:728px"><svg class="ic" width="16" height="16" viewBox="0 0 16 16" ><path d="M3.4 12.4 Q2.8 14.4 1.4 15.2 Q4.4 15.2 6 13.6 Z" fill="#3a8ae0"/><path d="M8 7.6 L8 1.4 A6.6 6.2 0 0 0 1.4 7.6 Z" fill="#f04a28"/><path d="M8 7.6 L8 1.4 A6.6 6.2 0 0 1 14.6 7.6 Z" fill="#58c038"/><path d="M8 7.6 L1.4 7.6 A6.6 6.2 0 0 0 8 13.8 Z" fill="#3a8ae0"/><path d="M8 7.6 L14.6 7.6 A6.6 6.2 0 0 1 8 13.8 Z" fill="#ffc428"/><ellipse cx="8" cy="4.4" rx="4.8" ry="2.4" fill="#ffffff" opacity="0.3"/></svg></div>
<div class="hd" style="left:56px;top:763px;width:10px"></div>
<div class="sbtn" style="left:66px;top:754px"><svg class="ic" width="16" height="16" viewBox="0 0 16 16" ><ellipse cx="8" cy="14" rx="3.4" ry="0.7" fill="#000" opacity="0.12"/><circle cx="8" cy="6.1" r="4.9" fill="url(#gBulb)" stroke="#7aa4e0" stroke-width="0.55"/><path d="M7.2 6.6 L8 7.8 L8.8 6.6 M7.4 8.4 L8 7.8 L8.6 8.4" fill="none" stroke="#6a8cc8" stroke-width="0.45"/><rect x="6.3" y="10.8" width="3.4" height="2.7" rx="0.4" fill="#f0c020" stroke="#c89810" stroke-width="0.5"/><rect x="7.1" y="11.7" width="1.8" height="0.8" fill="#fff4b0"/></svg></div>
<div class="hd" style="left:56px;top:788px;width:10px"></div>
<div class="sbtn" style="left:66px;top:779px"><svg class="ic" width="16" height="16" viewBox="0 0 16 16" ><rect x="2.3" y="4.3" width="11.4" height="7.8" rx="0.5" fill="url(#gEnv)" stroke="#acacb8" stroke-width="1.0"/><path d="M2.7 4.8 L8 9.1 L13.3 4.8" fill="none" stroke="#bcbcc8" stroke-width="0.80"/><path d="M2.7 11.7 L6.4 8 M13.3 11.7 L9.6 8" fill="none" stroke="#d2d2dc" stroke-width="0.70"/></svg></div>
<div class="inp" style="left:243px;top:239px;width:64px;height:22px"></div>
<div class="sel" style="left:373px;top:237px;width:170px;height:22px;border:1px solid #aaa;box-sizing:border-box"></div>
<div class="arr" style="left:529px;top:246px"></div>
<div class="inp" style="left:595px;top:239px;width:129px;height:22px"></div>
<div class="inp" style="left:776px;top:239px;width:124px;height:22px"></div>
<div style="position:absolute;left:905px;top:243px;width:16px;height:14px"><svg class="ic" width="16" height="16" viewBox="0 0 16 16" ><rect x="0.5" y="0.5" width="15" height="13" fill="#ffffff" stroke="#6a6a6a" stroke-width="1"/><rect x="1" y="1" width="14" height="2.4" fill="#9a9a9a"/><path d="M1 6H15 M1 8.6H15 M1 11.2H15 M4.5 3.4V13 M8 3.4V13 M11.5 3.4V13" stroke="#6a6a6a" stroke-width="0.8"/></svg></div>
<div id="tbl"><div id="th"></div></div>
<div class="cb" style="left:236px;top:274px"></div>
<div class="cb" style="left:236px;top:301px"></div>
<div class="sbtn" style="left:266px;top:298.5px;height:23px;width:23px"><svg class="ic" width="16" height="16" viewBox="0 0 16 16" ><rect x="3.2" y="1.5" width="9.8" height="13.2" fill="#fff4b0" stroke="#4a4632" stroke-width="0.9"/><rect x="3.8" y="2.1" width="8.6" height="12" fill="none" stroke="#fffbe0" stroke-width="0.5"/><rect x="4.8" y="3.2" width="2.2" height="2.4" fill="#dcae44"/><path d="M4.8 7.6H11.4 M4.8 9.8H11.4 M4.8 12H11.4" stroke="#dcb050" stroke-width="0.9"/></svg></div>
<div class="sbtn kbtn" style="left:304px;top:298px;height:24px;width:23.5px"><svg class="ic" width="16" height="16" viewBox="0 0 16 16" ><g transform="translate(8 8.6) scale(1.12) translate(-8 -8.6)"><g stroke="#ffffff" stroke-width="1.3" stroke-linejoin="round"><circle cx="8" cy="5.6" r="2.2" fill="#8c8c8c"/><path d="M7.1 6.6 H8.9 L8.6 12.2 H7.4 Z" fill="#8c8c8c"/></g><circle cx="8" cy="5.6" r="2.2" fill="#8e8e8e"/><path d="M7 6.6 H9 L8.7 10 H7.3 Z" fill="#8e8e8e"/><path d="M7.35 10.7 H8.65 L8.55 12.2 H7.45Z" fill="#6a6a6a"/><circle cx="7.5" cy="5" r="0.9" fill="#bebebe"/></g></svg></div>
<div class="sbtn" style="left:911.5px;top:298.5px;height:23px;width:23px"><svg class="ic" width="16" height="16" viewBox="0 0 16 16" style="margin:-1px 0 0 -1px"><path d="M13.4 1.2 L14.6 2.4 L12.2 5 L10.9 3.7 Z" fill="#f4f4f6" stroke="#6e6e76" stroke-width="0.6" stroke-linejoin="round"/><path d="M11.4 4.6 L6.4 9.6" stroke="#74747c" stroke-width="1"/><ellipse cx="3.6" cy="11.9" rx="3.5" ry="2.2" transform="rotate(-42 3.6 11.9)" fill="#7c9ccc" stroke="#183c9c" stroke-width="1"/><ellipse cx="3.9" cy="11.5" rx="1.8" ry="0.9" transform="rotate(-42 3.9 11.5)" fill="#a4bce0"/><path d="M6 6 L12.6 12.8" stroke="#6e6e76" stroke-width="2.4" stroke-linecap="round"/><path d="M6 6 L12.6 12.8" stroke="#f2f2f4" stroke-width="1.2" stroke-linecap="round"/><path d="M3.4 1.4 Q5.6 1 6.6 2.8 Q7.4 4.6 6.4 6.2 L4.6 6.6 Q2.2 6.6 1.2 4.4 L3.6 5 L4.8 3.8 Z" fill="#f4f4f6" stroke="#6e6e76" stroke-width="0.6" stroke-linejoin="round"/></svg></div>
<div class="alt" style="top:334px;height:40px"></div>
<div class="cb" style="left:236px;top:341px"></div>
<div class="sbtn" style="left:266px;top:338.5px;height:23px;width:23px"><svg class="ic" width="16" height="16" viewBox="0 0 16 16" ><g transform="translate(1.2 0.6)"><path d="M1.4 2.6 L3.2 3.2 L4.6 10 H11" fill="none" stroke="#4e4e5e" stroke-width="1.1" stroke-linejoin="round"/><path d="M3.5 4.2 H11.6 L10.8 8.8 H4.4 Z" fill="url(#gCart)" stroke="#b01c1c" stroke-width="0.5"/><circle cx="5.4" cy="12.4" r="1.25" fill="#d8d8f0" stroke="#3c3c98" stroke-width="0.9"/><circle cx="10" cy="12.4" r="1.25" fill="#d8d8f0" stroke="#3c3c98" stroke-width="0.9"/><path d="M8.2 5.2 H12 V3.2 L16.4 6.6 L12 10 V8 H8.2 Z" fill="url(#gArrow)" stroke="#e08a10" stroke-width="0.4"/></g></svg></div>
<div class="sbtn kbtn" style="left:304px;top:338px;height:24px;width:23.5px"><svg class="ic" width="16" height="16" viewBox="0 0 16 16" ><g transform="translate(8 8.6) scale(1.12) translate(-8 -8.6)"><g stroke="#ffffff" stroke-width="1.3" stroke-linejoin="round"><circle cx="8" cy="5.6" r="2.2" fill="#8c8c8c"/><path d="M7.1 6.6 H8.9 L8.6 12.2 H7.4 Z" fill="#8c8c8c"/></g><circle cx="8" cy="5.6" r="2.2" fill="#8e8e8e"/><path d="M7 6.6 H9 L8.7 10 H7.3 Z" fill="#8e8e8e"/><path d="M7.35 10.7 H8.65 L8.55 12.2 H7.45Z" fill="#6a6a6a"/><circle cx="7.5" cy="5" r="0.9" fill="#bebebe"/></g></svg></div>
<div class="sbtn" style="left:911.5px;top:338.5px;height:23px;width:23px"><svg class="ic" width="16" height="16" viewBox="0 0 16 16" style="margin:-1px 0 0 -1px"><path d="M13.4 1.2 L14.6 2.4 L12.2 5 L10.9 3.7 Z" fill="#f4f4f6" stroke="#6e6e76" stroke-width="0.6" stroke-linejoin="round"/><path d="M11.4 4.6 L6.4 9.6" stroke="#74747c" stroke-width="1"/><ellipse cx="3.6" cy="11.9" rx="3.5" ry="2.2" transform="rotate(-42 3.6 11.9)" fill="#7c9ccc" stroke="#183c9c" stroke-width="1"/><ellipse cx="3.9" cy="11.5" rx="1.8" ry="0.9" transform="rotate(-42 3.9 11.5)" fill="#a4bce0"/><path d="M6 6 L12.6 12.8" stroke="#6e6e76" stroke-width="2.4" stroke-linecap="round"/><path d="M6 6 L12.6 12.8" stroke="#f2f2f4" stroke-width="1.2" stroke-linecap="round"/><path d="M3.4 1.4 Q5.6 1 6.6 2.8 Q7.4 4.6 6.4 6.2 L4.6 6.6 Q2.2 6.6 1.2 4.4 L3.6 5 L4.8 3.8 Z" fill="#f4f4f6" stroke="#6e6e76" stroke-width="0.6" stroke-linejoin="round"/></svg></div>
<div class="cb" style="left:236px;top:381px"></div>
<div class="sbtn" style="left:266px;top:378.5px;height:23px;width:23px"><svg class="ic" width="16" height="16" viewBox="0 0 16 16" ><rect x="2.3" y="4.3" width="11.4" height="7.8" rx="0.5" fill="url(#gEnv)" stroke="#acacb8" stroke-width="1.0"/><path d="M2.7 4.8 L8 9.1 L13.3 4.8" fill="none" stroke="#bcbcc8" stroke-width="0.80"/><path d="M2.7 11.7 L6.4 8 M13.3 11.7 L9.6 8" fill="none" stroke="#d2d2dc" stroke-width="0.70"/></svg></div>
<div class="alt" style="top:414px;height:32px"></div>
<div class="cb" style="left:236px;top:421px"></div>
<div class="sbtn" style="left:266px;top:418.5px;height:23px;width:23px"><svg class="ic" width="16" height="16" viewBox="0 0 16 16" ><rect x="2.3" y="4.3" width="11.4" height="7.8" rx="0.5" fill="url(#gEnv)" stroke="#acacb8" stroke-width="1.0"/><path d="M2.7 4.8 L8 9.1 L13.3 4.8" fill="none" stroke="#bcbcc8" stroke-width="0.80"/><path d="M2.7 11.7 L6.4 8 M13.3 11.7 L9.6 8" fill="none" stroke="#d2d2dc" stroke-width="0.70"/></svg></div>
<div class="cb" style="left:236px;top:453px"></div>
<div class="sbtn" style="left:266px;top:450.5px;height:23px;width:23px"><svg class="ic" width="16" height="16" viewBox="0 0 16 16" ><rect x="2.3" y="4.3" width="11.4" height="7.8" rx="0.5" fill="url(#gEnv)" stroke="#acacb8" stroke-width="1.0"/><path d="M2.7 4.8 L8 9.1 L13.3 4.8" fill="none" stroke="#bcbcc8" stroke-width="0.80"/><path d="M2.7 11.7 L6.4 8 M13.3 11.7 L9.6 8" fill="none" stroke="#d2d2dc" stroke-width="0.70"/></svg></div>
<div class="alt" style="top:486px;height:72px"></div>
<div class="cb" style="left:236px;top:493px"></div>
<div class="sbtn" style="left:266px;top:490.5px;height:23px;width:23px"><svg class="ic" width="16" height="16" viewBox="0 0 16 16" ><path d="M2.2 3.4 Q0.8 5.6 2.6 8.2" fill="none" stroke="#7078c8" stroke-width="0.9"/><ellipse cx="7" cy="6.6" rx="4.2" ry="5.6" transform="rotate(-32 7 6.6)" fill="#2c2c30"/><ellipse cx="7.6" cy="7" rx="3.2" ry="4.5" transform="rotate(-32 7.6 7)" fill="#8c8c92"/><ellipse cx="7.9" cy="7.3" rx="2.3" ry="3.3" transform="rotate(-32 7.9 7.3)" fill="#4a4a50"/><ellipse cx="7" cy="6" rx="1.2" ry="1.7" transform="rotate(-32 7 6)" fill="#d8d8dc"/><path d="M12.4 7.4 Q13.2 11 9.2 13.6 M11.2 7.8 Q11.8 10.4 8.6 12.4 M13.6 7 Q14.6 11.6 9.8 14.8" fill="none" stroke="#8a90e0" stroke-width="0.7"/></svg></div>
<div class="sbtn kbtn" style="left:304px;top:490px;height:24px;width:23.5px"><svg class="ic" width="16" height="16" viewBox="0 0 16 16" ><g transform="translate(8 8.6) scale(1.12) translate(-8 -8.6)"><g stroke="#ffffff" stroke-width="1.3" stroke-linejoin="round"><circle cx="8" cy="5.6" r="2.2" fill="#8c8c8c"/><path d="M7.1 6.6 H8.9 L8.6 12.2 H7.4 Z" fill="#8c8c8c"/></g><circle cx="8" cy="5.6" r="2.2" fill="#8e8e8e"/><path d="M7 6.6 H9 L8.7 10 H7.3 Z" fill="#8e8e8e"/><path d="M7.35 10.7 H8.65 L8.55 12.2 H7.45Z" fill="#6a6a6a"/><circle cx="7.5" cy="5" r="0.9" fill="#bebebe"/></g></svg></div>
<div class="sbtn" style="left:911.5px;top:490.5px;height:23px;width:23px"><svg class="ic" width="16" height="16" viewBox="0 0 16 16" style="margin:-1px 0 0 -1px"><path d="M13.4 1.2 L14.6 2.4 L12.2 5 L10.9 3.7 Z" fill="#f4f4f6" stroke="#6e6e76" stroke-width="0.6" stroke-linejoin="round"/><path d="M11.4 4.6 L6.4 9.6" stroke="#74747c" stroke-width="1"/><ellipse cx="3.6" cy="11.9" rx="3.5" ry="2.2" transform="rotate(-42 3.6 11.9)" fill="#7c9ccc" stroke="#183c9c" stroke-width="1"/><ellipse cx="3.9" cy="11.5" rx="1.8" ry="0.9" transform="rotate(-42 3.9 11.5)" fill="#a4bce0"/><path d="M6 6 L12.6 12.8" stroke="#6e6e76" stroke-width="2.4" stroke-linecap="round"/><path d="M6 6 L12.6 12.8" stroke="#f2f2f4" stroke-width="1.2" stroke-linecap="round"/><path d="M3.4 1.4 Q5.6 1 6.6 2.8 Q7.4 4.6 6.4 6.2 L4.6 6.6 Q2.2 6.6 1.2 4.4 L3.6 5 L4.8 3.8 Z" fill="#f4f4f6" stroke="#6e6e76" stroke-width="0.6" stroke-linejoin="round"/></svg></div>
<div class="cb" style="left:236px;top:565px"></div>
<div class="sbtn" style="left:266px;top:562.5px;height:23px;width:23px"><svg class="ic" width="16" height="16" viewBox="0 0 16 16" ><rect x="2.3" y="4.3" width="11.4" height="7.8" rx="0.5" fill="url(#gEnv)" stroke="#acacb8" stroke-width="1.0"/><path d="M2.7 4.8 L8 9.1 L13.3 4.8" fill="none" stroke="#bcbcc8" stroke-width="0.80"/><path d="M2.7 11.7 L6.4 8 M13.3 11.7 L9.6 8" fill="none" stroke="#d2d2dc" stroke-width="0.70"/></svg></div>
<div class="alt" style="top:598px;height:40px"></div>
<div class="cb" style="left:236px;top:605px"></div>
<div class="sbtn" style="left:266px;top:602.5px;height:23px;width:23px"><svg class="ic" width="16" height="16" viewBox="0 0 16 16" ><rect x="2.3" y="4.3" width="11.4" height="7.8" rx="0.5" fill="url(#gEnv)" stroke="#acacb8" stroke-width="1.0"/><path d="M2.7 4.8 L8 9.1 L13.3 4.8" fill="none" stroke="#bcbcc8" stroke-width="0.80"/><path d="M2.7 11.7 L6.4 8 M13.3 11.7 L9.6 8" fill="none" stroke="#d2d2dc" stroke-width="0.70"/></svg></div>
<div class="cb" style="left:236px;top:645px"></div>
<div class="sbtn" style="left:266px;top:642.5px;height:23px;width:23px"><svg class="ic" width="16" height="16" viewBox="0 0 16 16" ><rect x="2.3" y="4.3" width="11.4" height="7.8" rx="0.5" fill="url(#gEnv)" stroke="#acacb8" stroke-width="1.0"/><path d="M2.7 4.8 L8 9.1 L13.3 4.8" fill="none" stroke="#bcbcc8" stroke-width="0.80"/><path d="M2.7 11.7 L6.4 8 M13.3 11.7 L9.6 8" fill="none" stroke="#d2d2dc" stroke-width="0.70"/></svg></div>
<div class="alt" style="top:678px;height:88px"></div>
<div class="cb" style="left:236px;top:685px"></div>
<div class="sbtn" style="left:266px;top:682.5px;height:23px;width:23px"><svg class="ic" width="16" height="16" viewBox="0 0 16 16" ><g transform="rotate(-42 8 8)" fill="none" stroke="#9c9ca2" stroke-width="2"><rect x="1.4" y="5.9" width="6.4" height="4.2" rx="2.1"/><rect x="8.2" y="5.9" width="6.4" height="4.2" rx="2.1"/></g><g transform="rotate(-42 8 8)"><path d="M5.8 8H10.2" stroke="#8a8a90" stroke-width="1.8"/><path d="M2.6 7H6.4 M9.4 7H13.4" stroke="#c4c4ca" stroke-width="0.6"/></g></svg></div>
<div class="sbtn kbtn" style="left:304px;top:682px;height:24px;width:23.5px"><svg class="ic" width="16" height="16" viewBox="0 0 16 16" ><g transform="translate(8 8.6) scale(1.12) translate(-8 -8.6)"><g stroke="#ffffff" stroke-width="1.3" stroke-linejoin="round"><circle cx="8" cy="5.6" r="2.2" fill="#8c8c8c"/><path d="M7.1 6.6 H8.9 L8.6 12.2 H7.4 Z" fill="#8c8c8c"/></g><circle cx="8" cy="5.6" r="2.2" fill="#8e8e8e"/><path d="M7 6.6 H9 L8.7 10 H7.3 Z" fill="#8e8e8e"/><path d="M7.35 10.7 H8.65 L8.55 12.2 H7.45Z" fill="#6a6a6a"/><circle cx="7.5" cy="5" r="0.9" fill="#bebebe"/></g></svg></div>
<div class="sbtn" style="left:911.5px;top:682.5px;height:23px;width:23px"><svg class="ic" width="16" height="16" viewBox="0 0 16 16" style="margin:-1px 0 0 -1px"><path d="M13.4 1.2 L14.6 2.4 L12.2 5 L10.9 3.7 Z" fill="#f4f4f6" stroke="#6e6e76" stroke-width="0.6" stroke-linejoin="round"/><path d="M11.4 4.6 L6.4 9.6" stroke="#74747c" stroke-width="1"/><ellipse cx="3.6" cy="11.9" rx="3.5" ry="2.2" transform="rotate(-42 3.6 11.9)" fill="#7c9ccc" stroke="#183c9c" stroke-width="1"/><ellipse cx="3.9" cy="11.5" rx="1.8" ry="0.9" transform="rotate(-42 3.9 11.5)" fill="#a4bce0"/><path d="M6 6 L12.6 12.8" stroke="#6e6e76" stroke-width="2.4" stroke-linecap="round"/><path d="M6 6 L12.6 12.8" stroke="#f2f2f4" stroke-width="1.2" stroke-linecap="round"/><path d="M3.4 1.4 Q5.6 1 6.6 2.8 Q7.4 4.6 6.4 6.2 L4.6 6.6 Q2.2 6.6 1.2 4.4 L3.6 5 L4.8 3.8 Z" fill="#f4f4f6" stroke="#6e6e76" stroke-width="0.6" stroke-linejoin="round"/></svg></div>
<div class="cb" style="left:236px;top:773px"></div>
<div class="sbtn" style="left:266px;top:770.5px;height:23px;width:23px"><svg class="ic" width="16" height="16" viewBox="0 0 16 16" ><rect x="2.3" y="4.3" width="11.4" height="7.8" rx="0.5" fill="url(#gEnv)" stroke="#acacb8" stroke-width="1.0"/><path d="M2.7 4.8 L8 9.1 L13.3 4.8" fill="none" stroke="#bcbcc8" stroke-width="0.80"/><path d="M2.7 11.7 L6.4 8 M13.3 11.7 L9.6 8" fill="none" stroke="#d2d2dc" stroke-width="0.70"/></svg></div>
<span class="t" style="left:29.00px;top:70.00px;font-size:10.8px;line-height:14px;color:#fff;transform:scaleX(0.9807);font-weight:bold;-webkit-text-stroke:0;">4M Danışmanlık Tic. Ltd. Şti.-Patent Ve Marka Ofisi</span>
<span class="t" style="left:29.00px;top:84.00px;font-size:10.8px;line-height:14px;color:#fff;transform:scaleX(0.9242);font-weight:bold;-webkit-text-stroke:0;">[KISAYOL -]</span>
<span class="t" style="left:858.20px;top:6.80px;font-size:11px;line-height:14px;color:#e4f0d0;letter-spacing:0.231px;font-weight:bold;-webkit-text-stroke:0;text-shadow:0 1px 1px rgba(60,100,20,.6);">Ana Sayfa | Çıkış</span>
<span class="t" style="left:32.00px;top:120.00px;font-size:11.7px;line-height:16px;color:#fff;transform:scaleX(0.8553);">İŞLERİM</span>
<span class="t" style="left:86.30px;top:120.00px;font-size:11.7px;line-height:16px;color:#fff;transform:scaleX(0.8606);">UYARI</span>
<span class="t" style="left:130.40px;top:120.00px;font-size:11.7px;line-height:16px;color:#fff;transform:scaleX(0.8437);">HABERLEŞME</span>
<span class="t" style="left:212.20px;top:120.00px;font-size:11.7px;line-height:16px;color:#fff;transform:scaleX(0.8524);">GELEN MAİL</span>
<span class="t" style="left:287.00px;top:120.00px;font-size:11.7px;line-height:16px;color:#fff;transform:scaleX(0.9001);">MAİL KUTUM</span>
<span class="t" style="left:366.50px;top:120.00px;font-size:11.7px;line-height:16px;color:#fff;transform:scaleX(0.8029);">FAKS</span>
<span class="t" style="left:405.50px;top:120.00px;font-size:11.7px;line-height:16px;color:#fff;transform:scaleX(0.8000);">SES KAYIT</span>
<span class="t" style="left:466.30px;top:120.00px;font-size:11.7px;line-height:16px;color:#fff;transform:scaleX(0.8765);">FORMLAR</span>
<span class="t" style="left:614.00px;top:119.50px;font-size:11.6px;line-height:16px;color:#333;letter-spacing:0.283px;">Müşteri</span>
<span class="t" style="left:838.04px;top:120.40px;font-size:12.4px;line-height:16px;color:#bdbdbd;">M</span>
<span class="t" style="left:870.50px;top:120.40px;font-size:12.4px;line-height:16px;color:#bdbdbd;transform:scaleX(0.8928);">MB</span>
<span class="t" style="left:63.00px;top:210.00px;font-size:11.7px;line-height:16px;color:#1c1c24;letter-spacing:0.163px;">Mesaj</span>
<span class="t" style="left:123.31px;top:210.00px;font-size:11.7px;line-height:16px;color:#1c1c24;transform:scaleX(0.9861);">Görev</span>
<span class="t" style="left:176.25px;top:210.00px;font-size:11.7px;line-height:16px;color:#1c1c24;transform:scaleX(0.9447);">Görev [Dış İş]</span>
<span class="t" style="left:259.25px;top:210.00px;font-size:11.7px;line-height:16px;color:#1c1c24;transform:scaleX(0.9728);">Görev [Dış]</span>
<span class="t" style="left:330.62px;top:210.00px;font-size:11.7px;line-height:16px;color:#1c1c24;transform:scaleX(0.9638);">Dış Görev İşlem</span>
<span class="t" style="left:427.50px;top:210.00px;font-size:11.7px;line-height:16px;color:#1c1c24;letter-spacing:0.258px;">Toplantı</span>
<span class="t" style="left:497.59px;top:210.00px;font-size:11.7px;line-height:16px;color:#1c1c24;transform:scaleX(0.9008);">SMS</span>
<span class="t" style="left:554.44px;top:210.00px;font-size:11.7px;line-height:16px;color:#1c1c24;letter-spacing:0.107px;">Öneri</span>
<span class="t" style="left:616.80px;top:210.00px;font-size:11.7px;line-height:16px;color:#1c1c24;transform:scaleX(0.9875);">Hata</span>
<span class="t" style="left:666.25px;top:210.00px;font-size:11.7px;line-height:16px;color:#1c1c24;letter-spacing:0.158px;">Hatırlatma</span>
<span class="t" style="left:739.74px;top:210.00px;font-size:11.7px;line-height:16px;color:#1c1c24;letter-spacing:0.138px;">Duyuru</span>
<span class="t" style="left:810.08px;top:210.00px;font-size:11.7px;line-height:16px;color:#1c1c24;transform:scaleX(0.9798);">Ara</span>
<span class="t" style="left:856.02px;top:210.00px;font-size:11.7px;line-height:16px;color:#1c1c24;">Klasörler</span>
<span class="t" style="left:94.00px;top:238.60px;font-size:11.7px;line-height:16px;color:#151515;transform:scaleX(0.9723);">Yazışmalar</span>
<span class="t" style="left:94.00px;top:264.60px;font-size:11.7px;line-height:16px;color:#fff;transform:scaleX(0.9294);">Gelen</span>
<span class="t" style="left:94.00px;top:290.60px;font-size:11.7px;line-height:16px;color:#151515;letter-spacing:0.084px;">Giden</span>
<span class="t" style="left:94.00px;top:316.60px;font-size:11.7px;line-height:16px;color:#151515;transform:scaleX(0.9286);">Eski</span>
<span class="t" style="left:94.00px;top:342.60px;font-size:11.7px;line-height:16px;color:#151515;letter-spacing:0.032px;">Çöp Kutusu</span>
<span class="t" style="left:94.00px;top:368.60px;font-size:11.7px;line-height:16px;color:#151515;transform:scaleX(0.9733);">Avans</span>
<span class="t" style="left:70.00px;top:393.60px;font-size:11.7px;line-height:16px;color:#151515;letter-spacing:0.268px;">Duyuru</span>
<span class="t" style="left:94.00px;top:418.60px;font-size:11.7px;line-height:16px;color:#151515;transform:scaleX(0.9698);">Evrak Havale</span>
<span class="t" style="left:94.00px;top:444.60px;font-size:11.7px;line-height:16px;color:#151515;transform:scaleX(0.9835);">Gelen Kargo</span>
<span class="t" style="left:94.00px;top:470.60px;font-size:11.7px;line-height:16px;color:#151515;transform:scaleX(0.9891);">Giden Kargo</span>
<span class="t" style="left:94.00px;top:496.60px;font-size:11.7px;line-height:16px;color:#151515;letter-spacing:0.038px;">Görev</span>
<span class="t" style="left:94.00px;top:522.60px;font-size:11.7px;line-height:16px;color:#151515;transform:scaleX(0.9703);">Görev (Dış İş)</span>
<span class="t" style="left:94.00px;top:548.60px;font-size:11.7px;line-height:16px;color:#151515;transform:scaleX(0.9797);">Görev (Dış)</span>
<span class="t" style="left:94.00px;top:574.60px;font-size:11.7px;line-height:16px;color:#151515;letter-spacing:0.046px;">Hata</span>
<span class="t" style="left:94.00px;top:600.60px;font-size:11.7px;line-height:16px;color:#151515;letter-spacing:0.270px;">Hatırlatma</span>
<span class="t" style="left:94.00px;top:626.60px;font-size:11.7px;line-height:16px;color:#151515;transform:scaleX(0.9695);">Iş Havale</span>
<span class="t" style="left:94.00px;top:652.60px;font-size:11.7px;line-height:16px;color:#151515;letter-spacing:0.053px;">İzin</span>
<span class="t" style="left:94.00px;top:678.60px;font-size:11.7px;line-height:16px;color:#151515;letter-spacing:0.278px;">Kontrol</span>
<span class="t" style="left:94.00px;top:704.60px;font-size:11.7px;line-height:16px;color:#151515;letter-spacing:0.227px;">Mesaj</span>
<span class="t" style="left:94.00px;top:730.60px;font-size:11.7px;line-height:16px;color:#151515;letter-spacing:0.312px;">Müşteri Yorum</span>
<span class="t" style="left:94.00px;top:756.60px;font-size:11.7px;line-height:16px;color:#151515;letter-spacing:0.224px;">Öneri</span>
<span class="t" style="left:224.50px;top:236.70px;font-size:10.8px;line-height:14px;color:#111;transform:scaleX(0.9371);font-weight:bold;-webkit-text-stroke:0;">No</span>
<span class="t" style="left:317.50px;top:236.70px;font-size:10.8px;line-height:14px;color:#111;transform:scaleX(0.9314);font-weight:bold;-webkit-text-stroke:0;">Gönderen</span>
<span class="t" style="left:378.00px;top:240.50px;font-size:11.6px;line-height:16px;color:#8a8a8a;transform:scaleX(0.9884);font-style:italic;">Lütfen Seçiniz</span>
<span class="t" style="left:564.50px;top:236.70px;font-size:10.8px;line-height:14px;color:#111;transform:scaleX(0.8879);font-weight:bold;-webkit-text-stroke:0;">Konu</span>
<span class="t" style="left:741.25px;top:236.70px;font-size:10.8px;line-height:14px;color:#111;transform:scaleX(0.9874);font-weight:bold;-webkit-text-stroke:0;">Tarihi</span>
<span class="t" style="left:343.00px;top:273.00px;font-size:11.7px;line-height:16px;color:#333;letter-spacing:0.023px;">No</span>
<span class="t" style="left:387.00px;top:273.00px;font-size:11.7px;line-height:16px;color:#333;transform:scaleX(0.9811);">Gönderen</span>
<span class="t" style="left:457.00px;top:273.00px;font-size:11.7px;line-height:16px;color:#333;letter-spacing:0.176px;">Konu</span>
<span class="t" style="left:711.25px;top:273.00px;font-size:11.7px;line-height:16px;color:#333;letter-spacing:0.158px;">Gösterim Tarihi</span>
<span class="t" style="left:811.75px;top:273.00px;font-size:11.7px;line-height:16px;color:#333;transform:scaleX(0.9735);">Gösterim Saati</span>
<span class="t" style="left:342.00px;top:298.00px;font-size:10.8px;line-height:16px;color:#333;">99966</span>
<span class="t" style="left:386.25px;top:298.00px;font-size:10.8px;line-height:16px;color:#333;transform:scaleX(0.9446);">KISAYOL -</span>
<span class="t" style="left:457.00px;top:298.00px;font-size:10.8px;line-height:16px;color:#000;transform:scaleX(0.9633);font-weight:bold;-webkit-text-stroke:0;text-decoration:underline;">74080 nolu projede size havale edilen belgelerin</span>
<span class="t" style="left:457.00px;top:314.00px;font-size:10.8px;line-height:16px;color:#000;transform:scaleX(0.9647);font-weight:bold;-webkit-text-stroke:0;text-decoration:underline;">kontrolünü yapınız!!!</span>
<span class="t" style="left:711.30px;top:298.00px;font-size:10.8px;line-height:16px;color:#333;letter-spacing:0.075px;">14.01.2011</span>
<span class="t" style="left:811.50px;top:298.00px;font-size:10.8px;line-height:16px;color:#333;">12:04:43</span>
<span class="t" style="left:342.00px;top:338.00px;font-size:10.8px;line-height:16px;color:#333;">99965</span>
<span class="t" style="left:386.25px;top:338.00px;font-size:10.8px;line-height:16px;color:#333;transform:scaleX(0.9446);">KISAYOL -</span>
<span class="t" style="left:457.00px;top:338.00px;font-size:10.8px;line-height:16px;color:#000;transform:scaleX(0.9735);font-weight:bold;-webkit-text-stroke:0;text-decoration:underline;">Giden Kargo Bildirimi - 62878 - NESİ 4M</span>
<span class="t" style="left:457.00px;top:354.00px;font-size:10.8px;line-height:16px;color:#000;transform:scaleX(0.9794);font-weight:bold;-webkit-text-stroke:0;text-decoration:underline;">DENEME 1-74080</span>
<span class="t" style="left:711.30px;top:338.00px;font-size:10.8px;line-height:16px;color:#333;letter-spacing:0.075px;">14.01.2011</span>
<span class="t" style="left:811.50px;top:338.00px;font-size:10.8px;line-height:16px;color:#333;">12:04:29</span>
<span class="t" style="left:342.00px;top:378.00px;font-size:10.8px;line-height:16px;color:#333;">99323</span>
<span class="t" style="left:386.25px;top:378.00px;font-size:10.8px;line-height:16px;color:#333;transform:scaleX(0.9627);">NESLİHAN</span>
<span class="t" style="left:386.25px;top:394.00px;font-size:10.8px;line-height:16px;color:#333;transform:scaleX(0.9882);">YAVUZ</span>
<span class="t" style="left:457.00px;top:378.00px;font-size:10.8px;line-height:16px;color:#000;transform:scaleX(0.9537);font-weight:bold;-webkit-text-stroke:0;text-decoration:underline;">HİMMET BEY BU AKŞAM SAAT 22:30 DA TGRT</span>
<span class="t" style="left:457.00px;top:394.00px;font-size:10.8px;line-height:16px;color:#000;transform:scaleX(0.9355);font-weight:bold;-webkit-text-stroke:0;text-decoration:underline;">HABER'de CANLI YAYINDA</span>
<span class="t" style="left:711.30px;top:378.00px;font-size:10.8px;line-height:16px;color:#333;letter-spacing:0.075px;">12.01.2011</span>
<span class="t" style="left:811.50px;top:378.00px;font-size:10.8px;line-height:16px;color:#333;">13:27:15</span>
<span class="t" style="left:342.00px;top:418.00px;font-size:10.8px;line-height:16px;color:#333;">98678</span>
<span class="t" style="left:386.25px;top:418.00px;font-size:10.8px;line-height:16px;color:#333;transform:scaleX(0.9113);">DİLEK KOÇ</span>
<span class="t" style="left:457.00px;top:418.00px;font-size:10.8px;line-height:16px;color:#1a1a1a;letter-spacing:0.862px;text-decoration:underline;">Dahili no değişikliği.</span>
<span class="t" style="left:711.30px;top:418.00px;font-size:10.8px;line-height:16px;color:#333;letter-spacing:0.075px;">10.01.2011</span>
<span class="t" style="left:811.50px;top:418.00px;font-size:10.8px;line-height:16px;color:#333;">10:04:36</span>
<span class="t" style="left:342.00px;top:450.00px;font-size:10.8px;line-height:16px;color:#333;">98315</span>
<span class="t" style="left:386.25px;top:450.00px;font-size:10.8px;line-height:16px;color:#333;transform:scaleX(0.9697);">PINAR</span>
<span class="t" style="left:386.25px;top:466.00px;font-size:10.8px;line-height:16px;color:#333;transform:scaleX(0.8736);">GEZER</span>
<span class="t" style="left:457.00px;top:450.00px;font-size:10.8px;line-height:16px;color:#1a1a1a;letter-spacing:0.686px;text-decoration:underline;">Ofisyol Eğitimi</span>
<span class="t" style="left:711.30px;top:450.00px;font-size:10.8px;line-height:16px;color:#333;letter-spacing:0.075px;">07.01.2011</span>
<span class="t" style="left:811.50px;top:450.00px;font-size:10.8px;line-height:16px;color:#333;letter-spacing:0.195px;">11:13:11</span>
<span class="t" style="left:342.00px;top:490.00px;font-size:10.8px;line-height:16px;color:#333;">98213</span>
<span class="t" style="left:386.25px;top:490.00px;font-size:10.8px;line-height:16px;color:#333;transform:scaleX(0.9860);">MUSTAFA</span>
<span class="t" style="left:386.25px;top:506.00px;font-size:10.8px;line-height:16px;color:#333;transform:scaleX(0.9265);">KARTAL</span>
<span class="t" style="left:457.00px;top:490.00px;font-size:10.8px;line-height:16px;color:#000;transform:scaleX(0.9772);font-weight:bold;-webkit-text-stroke:0;text-decoration:underline;">Müşteri Arandı-83106-[231591] AKBOR BORU</span>
<span class="t" style="left:457.00px;top:506.00px;font-size:10.8px;line-height:16px;color:#000;transform:scaleX(0.9407);font-weight:bold;-webkit-text-stroke:0;text-decoration:underline;">SAN. VE TİC. LTD. ŞTİ.-ONAYLANMIŞ KİŞİ STATÜ</span>
<span class="t" style="left:457.00px;top:522.00px;font-size:10.8px;line-height:16px;color:#000;transform:scaleX(0.9221);font-weight:bold;-webkit-text-stroke:0;text-decoration:underline;">BELGE TALEBİ- C SINIFI Ses Kaydı-MÜŞTERİ</span>
<span class="t" style="left:457.00px;top:538.00px;font-size:10.8px;line-height:16px;color:#000;transform:scaleX(0.9789);font-weight:bold;-webkit-text-stroke:0;text-decoration:underline;">MEMNUNİYETİ</span>
<span class="t" style="left:711.30px;top:490.00px;font-size:10.8px;line-height:16px;color:#333;letter-spacing:0.075px;">06.01.2011</span>
<span class="t" style="left:811.50px;top:490.00px;font-size:10.8px;line-height:16px;color:#333;">17:57:59</span>
<span class="t" style="left:342.00px;top:562.00px;font-size:10.8px;line-height:16px;color:#333;">98056</span>
<span class="t" style="left:386.25px;top:562.00px;font-size:10.8px;line-height:16px;color:#333;transform:scaleX(0.9677);">TUĞBA</span>
<span class="t" style="left:386.25px;top:578.00px;font-size:10.8px;line-height:16px;color:#333;transform:scaleX(0.8944);">EROL</span>
<span class="t" style="left:457.00px;top:562.00px;font-size:10.8px;line-height:16px;color:#1a1a1a;letter-spacing:0.464px;text-decoration:underline;">Pazarlama Çalışmaları Hk.</span>
<span class="t" style="left:711.30px;top:562.00px;font-size:10.8px;line-height:16px;color:#333;letter-spacing:0.075px;">06.01.2011</span>
<span class="t" style="left:811.50px;top:562.00px;font-size:10.8px;line-height:16px;color:#333;letter-spacing:0.096px;">11:58:00</span>
<span class="t" style="left:342.00px;top:602.00px;font-size:10.8px;line-height:16px;color:#333;">96780</span>
<span class="t" style="left:386.25px;top:602.00px;font-size:10.8px;line-height:16px;color:#333;transform:scaleX(0.9627);">NESLİHAN</span>
<span class="t" style="left:386.25px;top:618.00px;font-size:10.8px;line-height:16px;color:#333;transform:scaleX(0.9882);">YAVUZ</span>
<span class="t" style="left:457.00px;top:602.00px;font-size:10.8px;line-height:16px;color:#1a1a1a;letter-spacing:0.755px;text-decoration:underline;">Ofisyol değişiklikler hk da</span>
<span class="t" style="left:711.30px;top:602.00px;font-size:10.8px;line-height:16px;color:#333;">31.12.2010</span>
<span class="t" style="left:811.50px;top:602.00px;font-size:10.8px;line-height:16px;color:#333;letter-spacing:0.096px;">11:12:24</span>
<span class="t" style="left:342.00px;top:642.00px;font-size:10.8px;line-height:16px;color:#333;">95888</span>
<span class="t" style="left:386.25px;top:642.00px;font-size:10.8px;line-height:16px;color:#333;transform:scaleX(0.9154);">ŞÜKRÜ</span>
<span class="t" style="left:386.25px;top:658.00px;font-size:10.8px;line-height:16px;color:#333;transform:scaleX(0.9355);">GÖKBAKAN</span>
<span class="t" style="left:457.00px;top:642.00px;font-size:10.8px;line-height:16px;color:#1a1a1a;letter-spacing:0.541px;text-decoration:underline;">Ortak yaşam alanlarımız hk.</span>
<span class="t" style="left:711.30px;top:642.00px;font-size:10.8px;line-height:16px;color:#333;">28.12.2010</span>
<span class="t" style="left:811.50px;top:642.00px;font-size:10.8px;line-height:16px;color:#333;">16:51:49</span>
<span class="t" style="left:342.00px;top:682.00px;font-size:10.8px;line-height:16px;color:#333;">95178</span>
<span class="t" style="left:386.25px;top:682.00px;font-size:10.8px;line-height:16px;color:#333;transform:scaleX(0.9446);">KISAYOL -</span>
<span class="t" style="left:457.00px;top:682.00px;font-size:10.8px;line-height:16px;color:#000;transform:scaleX(0.9299);font-weight:bold;-webkit-text-stroke:0;text-decoration:underline;">Adım Kontrol- 85322 nolu MARKA-TESCİL BELGE</span>
<span class="t" style="left:457.00px;top:698.00px;font-size:10.8px;line-height:16px;color:#000;transform:scaleX(0.9173);font-weight:bold;-webkit-text-stroke:0;text-decoration:underline;">TALEBİ-CYPRUS (KKTC) -W COLLECTION işine ait</span>
<span class="t" style="left:457.00px;top:714.00px;font-size:10.8px;line-height:16px;color:#000;transform:scaleX(0.9783);font-weight:bold;-webkit-text-stroke:0;text-decoration:underline;">16.12.2010 16:58:24 tarihli Fatura Cari adımı</span>
<span class="t" style="left:457.00px;top:730.00px;font-size:10.8px;line-height:16px;color:#000;transform:scaleX(0.9700);font-weight:bold;-webkit-text-stroke:0;text-decoration:underline;">firma sayfasında yayınlanmak için kontrol</span>
<span class="t" style="left:457.00px;top:746.00px;font-size:10.8px;line-height:16px;color:#000;transform:scaleX(0.9820);font-weight:bold;-webkit-text-stroke:0;text-decoration:underline;">amaçlı size havale edilmiştir.</span>
<span class="t" style="left:711.30px;top:682.00px;font-size:10.8px;line-height:16px;color:#333;">24.12.2010</span>
<span class="t" style="left:811.50px;top:682.00px;font-size:10.8px;line-height:16px;color:#333;">17:00:40</span>
<span class="t" style="left:342.00px;top:770.00px;font-size:10.8px;line-height:16px;color:#333;">94281</span>
<span class="t" style="left:386.25px;top:770.00px;font-size:10.8px;line-height:16px;color:#333;transform:scaleX(0.9615);">YILMAZ</span>
<span class="t" style="left:457.00px;top:770.00px;font-size:10.8px;line-height:16px;color:#1a1a1a;letter-spacing:0.580px;text-decoration:underline;">Bu linkle tesvik araması yapınız. herkes en</span>
<span class="t" style="left:711.30px;top:770.00px;font-size:10.8px;line-height:16px;color:#333;">21.12.2010</span>
<span class="t" style="left:811.50px;top:770.00px;font-size:10.8px;line-height:16px;color:#333;">18:04:59</span>
</body></html>
